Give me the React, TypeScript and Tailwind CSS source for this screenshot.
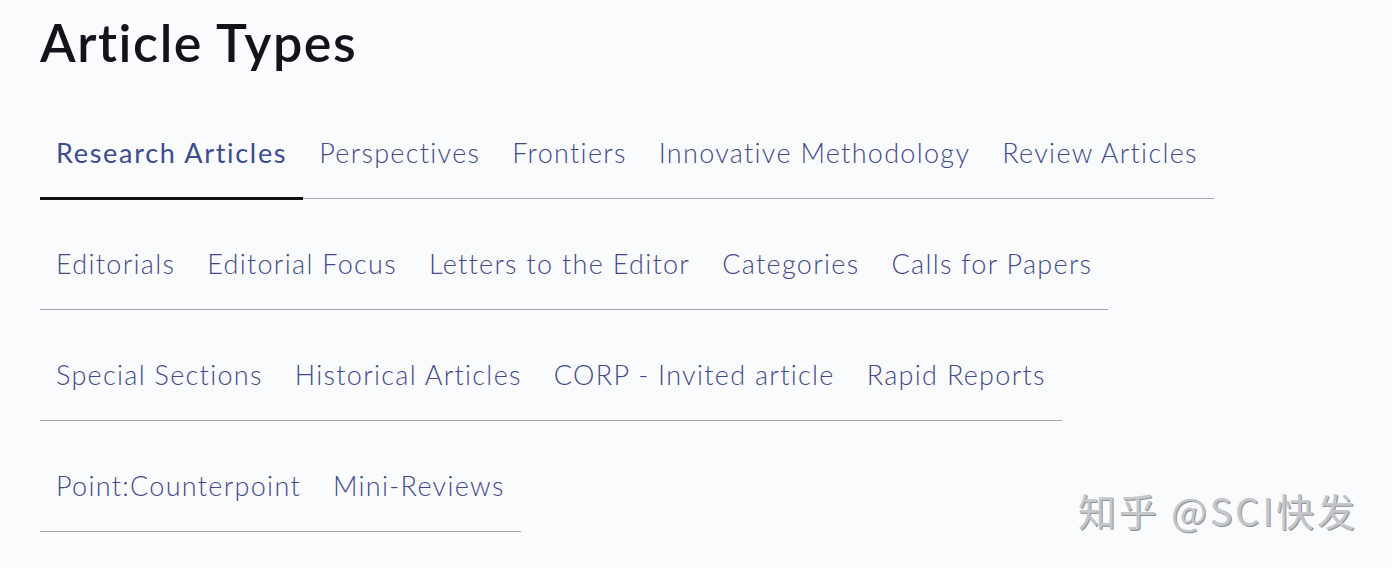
import * as React from "react";

const rows: string[][] = [
  ["Research Articles", "Perspectives", "Frontiers", "Innovative Methodology", "Review Articles"],
  ["Editorials", "Editorial Focus", "Letters to the Editor", "Categories", "Calls for Papers"],
  ["Special Sections", "Historical Articles", "CORP - Invited article", "Rapid Reports"],
  ["Point:Counterpoint", "Mini-Reviews"],
];

const font = { fontFamily: '"Lato", "Noto Sans", sans-serif' };

export default function App() {
  return (
    <div className="relative h-[568px] w-[1392px] overflow-hidden bg-[#fafbfd]" style={font}>
      <h1 className="pl-[40px] pt-[8px] text-[52px] font-semibold leading-[68px] tracking-[1.6px] text-[#15121c]">
        Article Types
      </h1>

      <div className="mt-[32px] flex flex-col gap-[20px] pl-[40px]">
        {rows.map((row, ri) => (
          <div key={ri} className="flex w-fit border-b border-[#a3a5b0]">
            {row.map((label, i) => {
              const active = ri === 0 && i === 0;
              return (
                <div
                  key={label}
                  className={
                    "relative px-4 py-[27px] text-[27px] leading-[36px] " +
                    (active
                      ? "font-normal tracking-[1.7px] text-[#3d4c90]"
                      : "font-light tracking-[1.3px] text-[#434a8a]")
                  }
                >
                  {label}
                  {active && (
                    <span className="absolute -bottom-[2px] left-0 right-0 h-[3px] bg-[#111111]" />
                  )}
                </div>
              );
            })}
          </div>
        ))}
      </div>

      {/* watermark */}
      <div
        className="absolute left-[1078px] top-[486px] text-[38px] leading-[48px] tracking-[2.8px] text-[#c4c6ca] [text-shadow:1px_1px_0_#8e9095]"
        style={{ fontFamily: '"Noto Sans CJK SC", "Noto Sans", sans-serif' }}
      >
        知乎 @SCI快发
      </div>
    </div>
  );
}
